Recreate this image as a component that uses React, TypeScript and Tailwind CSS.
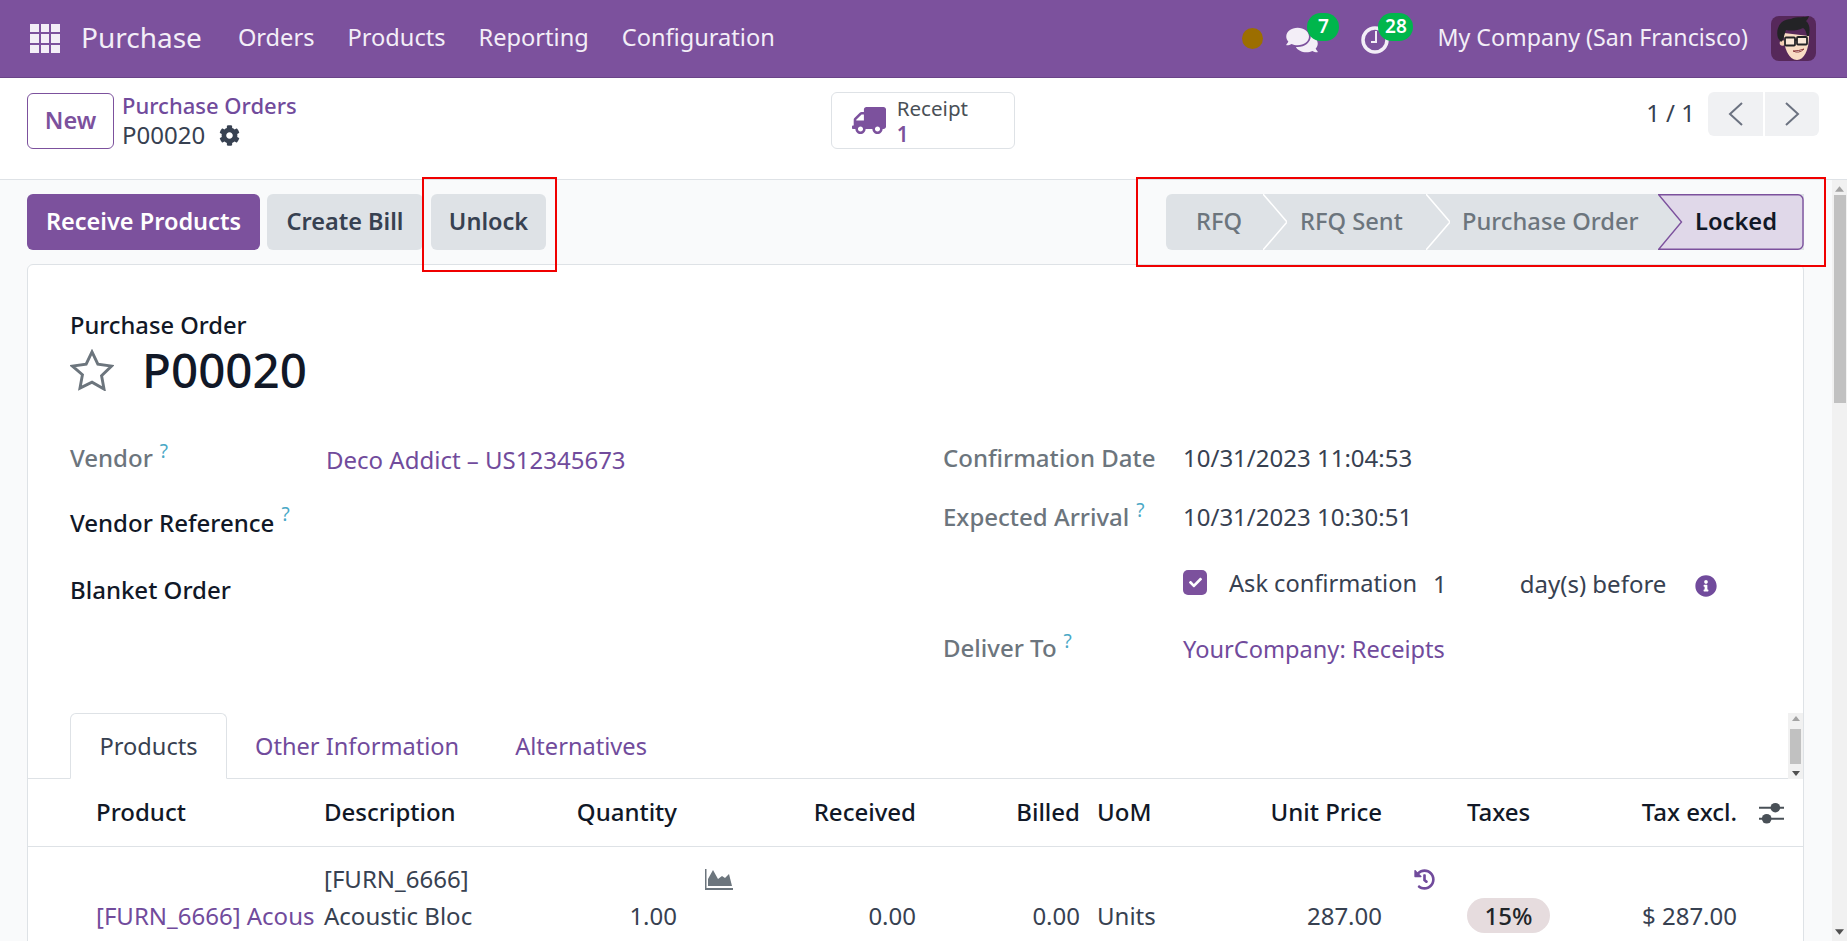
import { FaCog, FaComments, FaHistory, FaInfoCircle, FaTruck, FaCheck } from "react-icons/fa";

const tableCols = "grid grid-cols-[228px_176px_177px_63px_176px_164px_120px_182px_85px_150px_120px_1fr] pl-[68px]";

const Avatar = () => (
  <svg viewBox="0 0 45 45" className="w-[45px] h-[45px] rounded-lg">
    <rect width="45" height="45" fill="#56285a" />
    <circle cx="11.500" cy="27" r="2.800" fill="#f3cfb4" />
    <path d="M13 17C12 32 18 44 26 44c7 0 12-10 12-24z" fill="#f8dcc4" />
    <path d="M7 22C4 12 10 3 20 3c6-3 14-1 18-3-1 3-2 4-3 5 4 3 4 9 3 15h-2c-1-5-2-7-4-8-6 3-13 3-17 2-1 3-2 6-3 10l-2 2z" fill="#232326" />
    <rect x="14" y="21.500" width="10" height="8" rx="1" fill="#ffffff" fillOpacity=".35" stroke="#232326" strokeWidth="1.800" />
    <rect x="26" y="21" width="10" height="7.500" rx="1" fill="#ffffff" fillOpacity=".35" stroke="#232326" strokeWidth="1.800" />
    <path d="M24 24h2" stroke="#232326" strokeWidth="1.400" />
    <path d="M22 35q6 3 11-2-5 2-11 2z" fill="#ffffff" stroke="#8a3a3a" strokeWidth="1" />
  </svg>
);

const Help = ({ className }: { className: string }) => (
  <sup className={"text-[19px] font-normal text-[#4aa8c6] relative -top-[9px] ml-[7px] " + className}>?</sup>
);

const Chevron = () => (
  <svg viewBox="0 0 24 56" className="absolute top-0 left-0 w-[24px] h-[56px]" fill="none">
    <path d="M0 0 24 28 0 56" stroke="#ffffff" strokeWidth="1.500" />
  </svg>
);

export default function App() {
  return (
    <div className="relative w-[1847px] h-[941px] overflow-hidden bg-[#f9fafb] text-[24px] text-[#374151] font-['Noto_Sans',sans-serif]">
      {/* Navbar */}
      <header className="h-[78px] bg-[#7c519d] border-b border-[#6a4488] flex items-center text-[#f3eef7]">
        <div className="ml-[30px] grid grid-cols-3 gap-[2px] w-[30px] h-[29px]">
          {Array.from({ length: 9 }).map((_, i) => (
            <span key={i} className="bg-[#f3eef7]" />
          ))}
        </div>
        <span className="ml-[21px] text-[28px] -mt-[4px]">Purchase</span>
        <nav className="ml-[36px] flex gap-[33px] -mt-[2px] text-[23.6px]">
          <span>Orders</span>
          <span>Products</span>
          <span>Reporting</span>
          <span>Configuration</span>
        </nav>
        <div className="ml-auto flex items-center mr-[31px]">
          <span className="w-[21px] h-[21px] rounded-full bg-[#9c6e00]" />
          <div className="relative ml-[23px] w-[32px] h-[28px] mt-[2px]">
            <FaComments className="w-[32px] h-[28px]" />
            <span className="absolute -top-[13px] left-[21px] w-[32px] h-[28px] rounded-full bg-[#00b64c] text-white text-[19px] font-semibold flex items-center justify-center">7</span>
          </div>
          <div className="relative ml-[43px] w-[28px] h-[28px] mt-[2px]">
            <svg viewBox="0 0 28 28" className="w-[28px] h-[28px]" fill="none" stroke="currentColor">
              <circle cx="14" cy="14" r="12" strokeWidth="3.500" />
              <path d="M15 5v11h-5" strokeWidth="2" />
            </svg>
            <span className="absolute -top-[13px] left-[17px] w-[35px] h-[28px] rounded-full bg-[#00b64c] text-white text-[19px] font-semibold flex items-center justify-center">28</span>
          </div>
          <span className="ml-[48px] text-[23.2px] -mt-[2px]">My Company (San Francisco)</span>
          <div className="ml-[23px]">
            <Avatar />
          </div>
        </div>
      </header>

      {/* Control panel */}
      <div className="h-[102px] bg-white border-b border-[#dee2e6] flex items-start pl-[27px] pr-[28px]">
        <button className="mt-[15px] w-[87px] h-[56px] bg-white border border-[#7c519d] rounded-md text-[#7c519d] font-semibold text-[23.5px]">New</button>
        <div className="ml-[8px] mt-[12px] leading-[30px]">
          <div className="text-[#714b9c] font-medium text-[22px]">Purchase Orders</div>
          <div className="flex items-center gap-[14px]">
            P00020
            <FaCog className="w-[21px] h-[21px] text-[#374151]" />
          </div>
        </div>
        <div className="ml-[534px] mt-[14px] w-[184px] h-[57px] bg-white border border-[#dee2e6] rounded-md flex items-center pl-[20px]">
          <FaTruck className="w-[34px] h-[31px] text-[#7c519d] -scale-x-100" />
          <div className="ml-[11px] text-[20.6px] leading-[26px] mt-[1px] text-[#495057]">
            <div>Receipt</div>
            <div className="text-[#7c519d] font-semibold">1</div>
          </div>
        </div>
        <span className="ml-auto mt-[20px] leading-[30px]">1 / 1</span>
        <div className="ml-[13px] mt-[14px] flex gap-[2px]">
          <button className="w-[55px] h-[44px] bg-[#f0f1f3] rounded-l-md flex items-center justify-center">
            <svg viewBox="0 0 15 24" className="w-[15px] h-[24px]" fill="none" stroke="#6b7280" strokeWidth="2"><path d="M14 1 2 12l12 11" /></svg>
          </button>
          <button className="w-[54px] h-[44px] bg-[#f0f1f3] rounded-r-md flex items-center justify-center">
            <svg viewBox="0 0 15 24" className="w-[15px] h-[24px]" fill="none" stroke="#6b7280" strokeWidth="2"><path d="M1 1l12 11L1 23" /></svg>
          </button>
        </div>
      </div>

      <div className="flex">
        <main className="flex-1 pl-[27px] pr-[28px]">
          {/* Action bar */}
          <div className="h-[84px] flex items-center justify-between">
            <div className="flex font-semibold text-[23.5px]">
              <button className="w-[233px] h-[56px] rounded-md bg-[#7c519d] text-white">Receive Products</button>
              <button className="ml-[7px] w-[156px] h-[56px] rounded-md bg-[#dee2e6] text-[#374151]">Create Bill</button>
              <button className="ml-[8px] w-[115px] h-[56px] rounded-md bg-[#dee2e6] text-[#374151]">Unlock</button>
            </div>
            <div className="flex h-[56px] font-medium text-[23.7px] text-[#6c757d]">
              <div className="w-[97px] bg-[#dee2e6] rounded-l-md pl-[30px] leading-[54px]">RFQ</div>
              <div className="relative w-[163px] bg-[#dee2e6] pl-[37px] leading-[54px]">
                <Chevron />
                RFQ Sent
              </div>
              <div className="relative w-[232px] bg-[#dee2e6] pl-[36px] leading-[54px]">
                <Chevron />
                Purchase Order
              </div>
              <div className="relative w-[146px] bg-[#dee2e6] pl-[37px] leading-[54px] font-semibold text-[#111827]">
                <svg viewBox="0 0 146 56" className="absolute inset-0 w-[146px] h-[56px]">
                  <path d="M.7.7H140a5 5 0 0 1 5 5v44.600a5 5 0 0 1-5 5H.7L23.500 28z" fill="#e0d8e9" stroke="#7c519d" strokeWidth="1.400" />
                </svg>
                <span className="relative">Locked</span>
              </div>
            </div>
          </div>

          {/* Sheet */}
          <section className="relative h-[700px] bg-white border border-[#dee2e6] rounded-t-md overflow-hidden">
            <div className="pl-[42px] pt-[45px]">
              <div className="h-[30px] leading-[30px] font-medium text-[23.7px] text-[#111827]">Purchase Order</div>
              <div className="mt-[5px] h-[50px] flex items-center">
                <svg viewBox="0 0 44 43" className="w-[44px] h-[42px]" fill="none" stroke="#6c757d" strokeWidth="3">
                  <path d="M22 3l6 12.500 14 2-10.200 9.800 2.500 13.700L22 34l-12.300 6 2.500-13.700L2 17.500l14-2z" />
                </svg>
                <h1 className="ml-[28px] text-[47.5px] font-medium text-[#111827]">P00020</h1>
              </div>
              <div className="mt-[39px] flex">
                <div className="w-[873px]">
                  <div className="h-[50px] flex items-center">
                    <div className="w-[256px] font-medium text-[#6c757d] -mt-[2px]">Vendor<Help className="" /></div>
                    <span className="text-[#714b9c] mt-[2px]">Deco Addict – US12345673</span>
                  </div>
                  <div className="h-[78px] flex items-center font-medium text-[#111827]">Vendor Reference<Help className="text-[#1b93b5]" /></div>
                  <div className="h-[56px] flex items-center font-medium text-[#111827]">Blanket Order</div>
                </div>
                <div>
                  <div className="h-[50px] flex items-center -mt-[1px]">
                    <div className="w-[240px] font-medium text-[#6c757d]">Confirmation Date</div>
                    <span>10/31/2023 11:04:53</span>
                  </div>
                  <div className="h-[67px] flex items-center">
                    <div className="w-[240px] font-medium text-[#6c757d]">Expected Arrival<Help className="" /></div>
                    <span>10/31/2023 10:30:51</span>
                  </div>
                  <div className="h-[70px] flex items-center pl-[240px]">
                    <span className="w-[24px] h-[25px] rounded-[5px] bg-[#7c519d] flex items-center justify-center -mt-[6px]">
                      <FaCheck className="w-[13px] h-[13px] text-white" />
                    </span>
                    <span className="ml-[22px] -mt-[2px] text-[23.6px]">Ask confirmation</span>
                    <span className="ml-[16px] -mt-[2px]">1</span>
                    <span className="ml-[73px] -mt-[2px]">day(s) before</span>
                    <FaInfoCircle className="ml-[29px] w-[22px] h-[22px] text-[#714b9c] mt-[2px]" />
                  </div>
                  <div className="h-[60px] flex items-center">
                    <div className="w-[240px] font-medium text-[#6c757d] -mt-[4px]">Deliver To<Help className="" /></div>
                    <span className="text-[#714b9c] text-[23.6px]">YourCompany: Receipts</span>
                  </div>
                </div>
              </div>
            </div>

            {/* Tabs */}
            <div className="mt-[33px] h-[66px] border-b border-[#dee2e6] flex pl-[42px] text-[23.6px]">
              <div className="w-[157px] h-[66px] border border-[#dee2e6] border-b-white rounded-t-md bg-white text-center leading-[64px]">Products</div>
              <div className="px-[28px] leading-[66px] text-[#714b9c]">Other Information</div>
              <div className="px-[28px] leading-[66px] text-[#714b9c]">Alternatives</div>
            </div>
            <div className="absolute right-0 top-[448px] w-[15px] h-[66px] bg-[#f1f1f1] flex flex-col items-center justify-between py-[3px]">
              <svg viewBox="0 0 8 5" className="w-[8px] h-[5px]"><path d="M4 0 8 5H0z" fill="#a3a3a3" /></svg>
              <span className="w-[11px] h-[35px] bg-[#c1c1c1]" />
              <svg viewBox="0 0 8 5" className="w-[8px] h-[5px]"><path d="M0 0H8L4 5z" fill="#505050" /></svg>
            </div>

            {/* Order lines */}
            <div className={tableCols + " h-[68px] items-center border-b border-[#dee2e6] font-medium text-[#111827]"}>
              <div className="-mt-[2px]">Product</div>
              <div className="-mt-[2px]">Description</div>
              <div className="text-right -mt-[2px]">Quantity</div>
              <div />
              <div className="text-right -mt-[2px]">Received</div>
              <div className="text-right -mt-[2px]">Billed</div>
              <div className="pl-[17px] -mt-[2px]">UoM</div>
              <div className="text-right -mt-[2px]">Unit Price</div>
              <div />
              <div className="-mt-[2px]">Taxes</div>
              <div className="text-right -mt-[2px]">Tax excl.</div>
              <div className="pl-[22px]">
                <svg viewBox="0 0 26 24" className="w-[25px] h-[24px] text-[#495057]" fill="currentColor">
                  <path d="M0 5.500h26v2H0zM0 17h26v2H0z" />
                  <circle cx="17" cy="6.500" r="5" />
                  <circle cx="8" cy="18" r="5" />
                </svg>
              </div>
            </div>
            <div className={tableCols + " pt-[13px] leading-[37px] items-center"}>
              <div />
              <div>[FURN_6666]</div>
              <div />
              <div className="pl-[28px] pt-[2px]">
                <svg viewBox="0 0 28 21" className="w-[28px] h-[21px] text-[#6c757d]" fill="currentColor">
                  <path d="M0 0h1.500v19H28v2H0z" />
                  <path d="M3 17V10L8 1l5 9 4-3 3 2 4-4 3 12z" />
                </svg>
              </div>
              <div />
              <div />
              <div />
              <div />
              <div className="pl-[32px] pt-[2px]"><FaHistory className="w-[21px] h-[21px] text-[#714b9c]" /></div>
              <div />
              <div />
              <div />
              <div className="text-[#714b9c] whitespace-nowrap">[FURN_6666] Acous</div>
              <div className="whitespace-nowrap">Acoustic Bloc</div>
              <div className="text-right">1.00</div>
              <div />
              <div className="text-right">0.00</div>
              <div className="text-right">0.00</div>
              <div className="pl-[17px]">Units</div>
              <div className="text-right">287.00</div>
              <div />
              <div>
                <span className="inline-flex w-[83px] h-[35px] rounded-full bg-[#e6dcde] items-center justify-center font-medium text-[#212529]">15%</span>
              </div>
              <div className="text-right">$ 287.00</div>
              <div />
            </div>
          </section>
        </main>

        {/* Page scrollbar */}
        <aside className="w-[15px] h-[761px] bg-[#f1f1f1] flex flex-col items-center">
          <svg viewBox="0 0 10 6" className="mt-[6px] w-[9px] h-[6px]"><path d="M5 0 10 6H0z" fill="#a3a3a3" /></svg>
          <span className="mt-[3px] w-[12px] h-[208px] bg-[#c1c1c1]" />
          <svg viewBox="0 0 10 6" className="mt-auto mb-[6px] w-[9px] h-[6px]"><path d="M0 0H10L5 6z" fill="#505050" /></svg>
        </aside>
      </div>

      {/* Annotation boxes */}
      <div className="absolute left-[422px] top-[177px] w-[135px] h-[95px] border-2 border-[#f00000]" />
      <div className="absolute left-[1136px] top-[177px] w-[690px] h-[90px] border-2 border-[#f00000]" />
    </div>
  );
}
